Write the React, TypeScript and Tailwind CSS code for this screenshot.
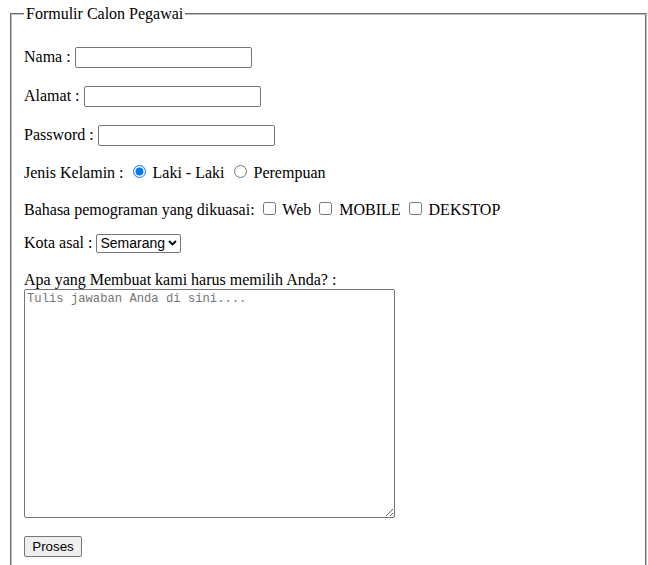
import React from "react";

const control = "font-['Liberation_Sans',Arial,sans-serif] text-[13.333px]";
const textInput = `${control} my-[1px] h-[21px] w-[177px] rounded-[2px] border border-[#767676] px-[2px]`;
const radio = "mt-[3px] mr-[3px] ml-[5px] h-[13px] w-[13px]";
const checkbox = "my-[3px] mr-[3px] ml-[4px] h-[13px] w-[13px]";

export default function App() {
  return (
    <div className="min-h-[565px] bg-white font-['Liberation_Serif','Times_New_Roman',serif] text-[16px] leading-[normal] text-black">
      <form className="pt-[5px]">
        <fieldset className="ml-[10px] w-[637px] border-2 border-[#c0c0c0] px-3 pt-[5.6px] pb-[10px] [border-style:groove]">
          <legend className="px-[2px]">Formulir Calon Pegawai</legend>

          <p className="mt-[17px]">
            Nama : <input type="text" className={textInput} />
          </p>
          <p className="mt-4">
            Alamat : <input type="text" className={textInput} />
          </p>
          <p className="mt-4">
            Password : <input type="password" className={textInput} />
          </p>

          <p className="mt-[15px]">
            Jenis Kelamin : <input type="radio" name="jk" defaultChecked className={radio} /> Laki - Laki{" "}
            <input type="radio" name="jk" className={radio} /> Perempuan
          </p>

          <p className="mt-[17px]">
            Bahasa pemograman yang dikuasai: <input type="checkbox" className={checkbox} /> Web{" "}
            <input type="checkbox" className={checkbox} /> MOBILE{" "}
            <input type="checkbox" className={checkbox} /> DEKSTOP
          </p>

          <p className="mt-[15px]">
            Kota asal :{" "}
            <span className="relative inline-block align-baseline">
              <select
                className={`${control} h-[19px] w-[85px] appearance-none rounded-[2px] border border-[#767676] bg-white pl-[3px] pr-[14px] text-[14px] leading-[17px]`}
                defaultValue="Semarang"
              >
                <option>Semarang</option>
                <option>Jakarta</option>
                <option>Surabaya</option>
              </select>
              <svg
                className="pointer-events-none absolute top-[6px] right-[4px] h-[6px] w-[9px]"
                viewBox="0 0 9 6"
                fill="none"
              >
                <path d="M1 1l3.5 3.5L8 1" stroke="#000" strokeWidth="1.8" />
              </svg>
            </span>
          </p>

          <p className="mt-[18px]">
            Apa yang Membuat kami harus memilih Anda? :
            <br />
            <textarea
              placeholder="Tulis jawaban Anda di sini...."
              className="h-[229px] w-[371px] resize rounded-[2px] border border-[#767676] px-[2px] py-[2px] align-bottom font-['Liberation_Mono',monospace] text-[12.2px] leading-[15px] placeholder:text-[#757575]"
            />
          </p>

          <p className="mt-[18px] mb-4">
            <button
              type="submit"
              className={`${control} h-[21px] w-[58px] rounded-[2px] border border-[#767676] bg-[#efefef] px-[6px]`}
            >
              Proses
            </button>
          </p>
        </fieldset>
      </form>
    </div>
  );
}
